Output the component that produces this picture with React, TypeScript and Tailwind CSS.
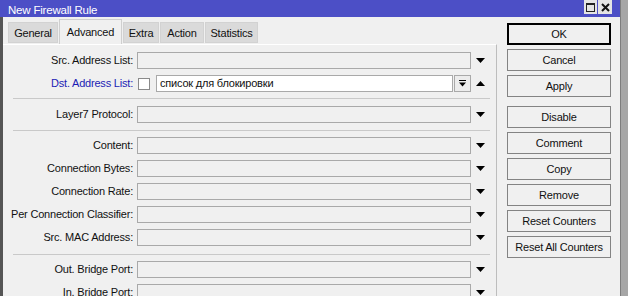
import { ReactNode } from 'react'

const tabs = [
  { name: 'General', w: 'w-[50px]' },
  { name: 'Advanced', w: 'w-[63px]', active: true },
  { name: 'Extra', w: 'w-[36px]' },
  { name: 'Action', w: 'w-[44px]' },
  { name: 'Statistics', w: 'w-[53px]' },
]

function Arrow({ up }: { up?: boolean }) {
  return (
    <div className="w-[19px] flex items-center justify-center">
      <svg width="9" height="5" viewBox="0 0 9 5">
        {up ? <polygon points="0,5 9,5 4.5,0" fill="#000" /> : <polygon points="0,0 9,0 4.5,5" fill="#000" />}
      </svg>
    </div>
  )
}

function Row({ label, mt }: { label: string; mt: string }) {
  return (
    <div className={`flex h-[17px] items-center pr-[6px] ${mt}`}>
      <div className="w-[130px] text-right">{label}:</div>
      <div className="ml-[4px] flex-1 h-full border border-[#a9a9a9] bg-[#f0f0f0]" />
      <Arrow />
    </div>
  )
}

function Sep({ mt }: { mt: string }) {
  return <div className={`ml-[10px] mr-[6px] border-t border-[#c9c9c9] ${mt}`} />
}

function Btn({ children, mt, def }: { children: ReactNode; mt?: string; def?: boolean }) {
  return (
    <div
      className={`h-[22px] w-[104px] flex items-center justify-center bg-[#f0f0f0] ${
        def ? 'border-2 border-black' : 'border border-[#838383]'
      } ${mt ?? ''}`}
    >
      {children}
    </div>
  )
}

export default function App() {
  return (
    <div className="w-[628px] h-[296px] overflow-hidden flex bg-[#a6a6a6] text-[11px] tracking-[-0.2px] text-[#111] font-['Liberation_Sans',Arial,sans-serif]">
      <div className="w-[621px] h-full flex flex-col border-r border-[#7d7d7d]">
        {/* title bar */}
        <div className="h-[17px] shrink-0 bg-[#4c4fc6] flex items-start">
          <div className="pl-[8px] pt-[2px] text-white text-[11.5px]">New Firewall Rule</div>
          <div className="ml-auto mr-[8px] flex gap-[1px]">
            <div className="w-[13px] h-[14px] bg-[#e4e4e4] flex items-center justify-center">
              <div className="w-[9px] h-[9px] border border-[#222] border-t-2" />
            </div>
            <div className="w-[14px] h-[14px] bg-[#e4e4e4] flex items-center justify-center">
              <svg width="9" height="9" viewBox="0 0 9 9">
                <path d="M1 1 L8 8 M8 1 L1 8" stroke="#111" strokeWidth="2" />
              </svg>
            </div>
          </div>
        </div>

        {/* body */}
        <div className="flex-1 flex border-l-[3px] border-[#555] bg-[#f0f0f0]">
          <div className="w-[494px] flex flex-col">
            {/* tabs */}
            <div className="h-[27px] pl-[5px] pt-[2px] flex items-end gap-[1px]">
              {tabs.map(t =>
                t.active ? (
                  <div
                    key={t.name}
                    className={`${t.w} h-[25px] bg-[#f0f0f0] border border-b-0 border-[#cfcfcf] flex items-start justify-center pt-[4px]`}
                  >
                    {t.name}
                  </div>
                ) : (
                  <div
                    key={t.name}
                    className={`${t.w} h-[21px] mb-[1px] bg-[#dadada] border border-[#d2d2d2] flex items-center justify-center pt-[1px]`}
                  >
                    {t.name}
                  </div>
                )
              )}
            </div>

            {/* panel */}
            <div className="flex-1 border-t border-white border-r border-r-[#bdbdbd] pt-[7px]">
              <Row label="Src. Address List" mt="" />
              <div className="flex h-[17px] items-center pr-[6px] mt-[6px]">
                <div className="w-[130px] text-right text-[#1c1cb5]">Dst. Address List:</div>
                <div className="ml-[5px] w-[12px] h-[12px] border border-[#8a8a8a] bg-white" />
                <div className="ml-[6px] flex-1 h-full border border-[#a9a9a9] bg-white flex items-center pl-[3px]">
                  список для блокировки
                </div>
                <div className="w-[17px] h-full ml-[1px] border border-[#a9a9a9] bg-[#ececec] flex items-center justify-center">
                  <svg width="7" height="7" viewBox="0 0 7 7">
                    <rect x="0" y="0" width="7" height="1" fill="#000" />
                    <polygon points="0,2.5 7,2.5 3.5,6.5" fill="#000" />
                  </svg>
                </div>
                <Arrow up />
              </div>
              <Sep mt="mt-[6px]" />
              <Row label="Layer7 Protocol" mt="mt-[7px]" />
              <Sep mt="mt-[7px]" />
              <Row label="Content" mt="mt-[6px]" />
              <Row label="Connection Bytes" mt="mt-[6px]" />
              <Row label="Connection Rate" mt="mt-[6px]" />
              <Row label="Per Connection Classifier" mt="mt-[6px]" />
              <Row label="Src. MAC Address" mt="mt-[6px]" />
              <Sep mt="mt-[8px]" />
              <Row label="Out. Bridge Port" mt="mt-[6px]" />
              <Row label="In. Bridge Port" mt="mt-[6px]" />
            </div>
          </div>

          {/* buttons */}
          <div className="flex-1 pl-[10px] pt-[6px] flex flex-col gap-[4px]">
            <Btn def>OK</Btn>
            <Btn>Cancel</Btn>
            <Btn>Apply</Btn>
            <Btn mt="mt-[5px]">Disable</Btn>
            <Btn>Comment</Btn>
            <Btn>Copy</Btn>
            <Btn>Remove</Btn>
            <Btn>Reset Counters</Btn>
            <Btn>Reset All Counters</Btn>
          </div>
        </div>
      </div>
    </div>
  )
}
